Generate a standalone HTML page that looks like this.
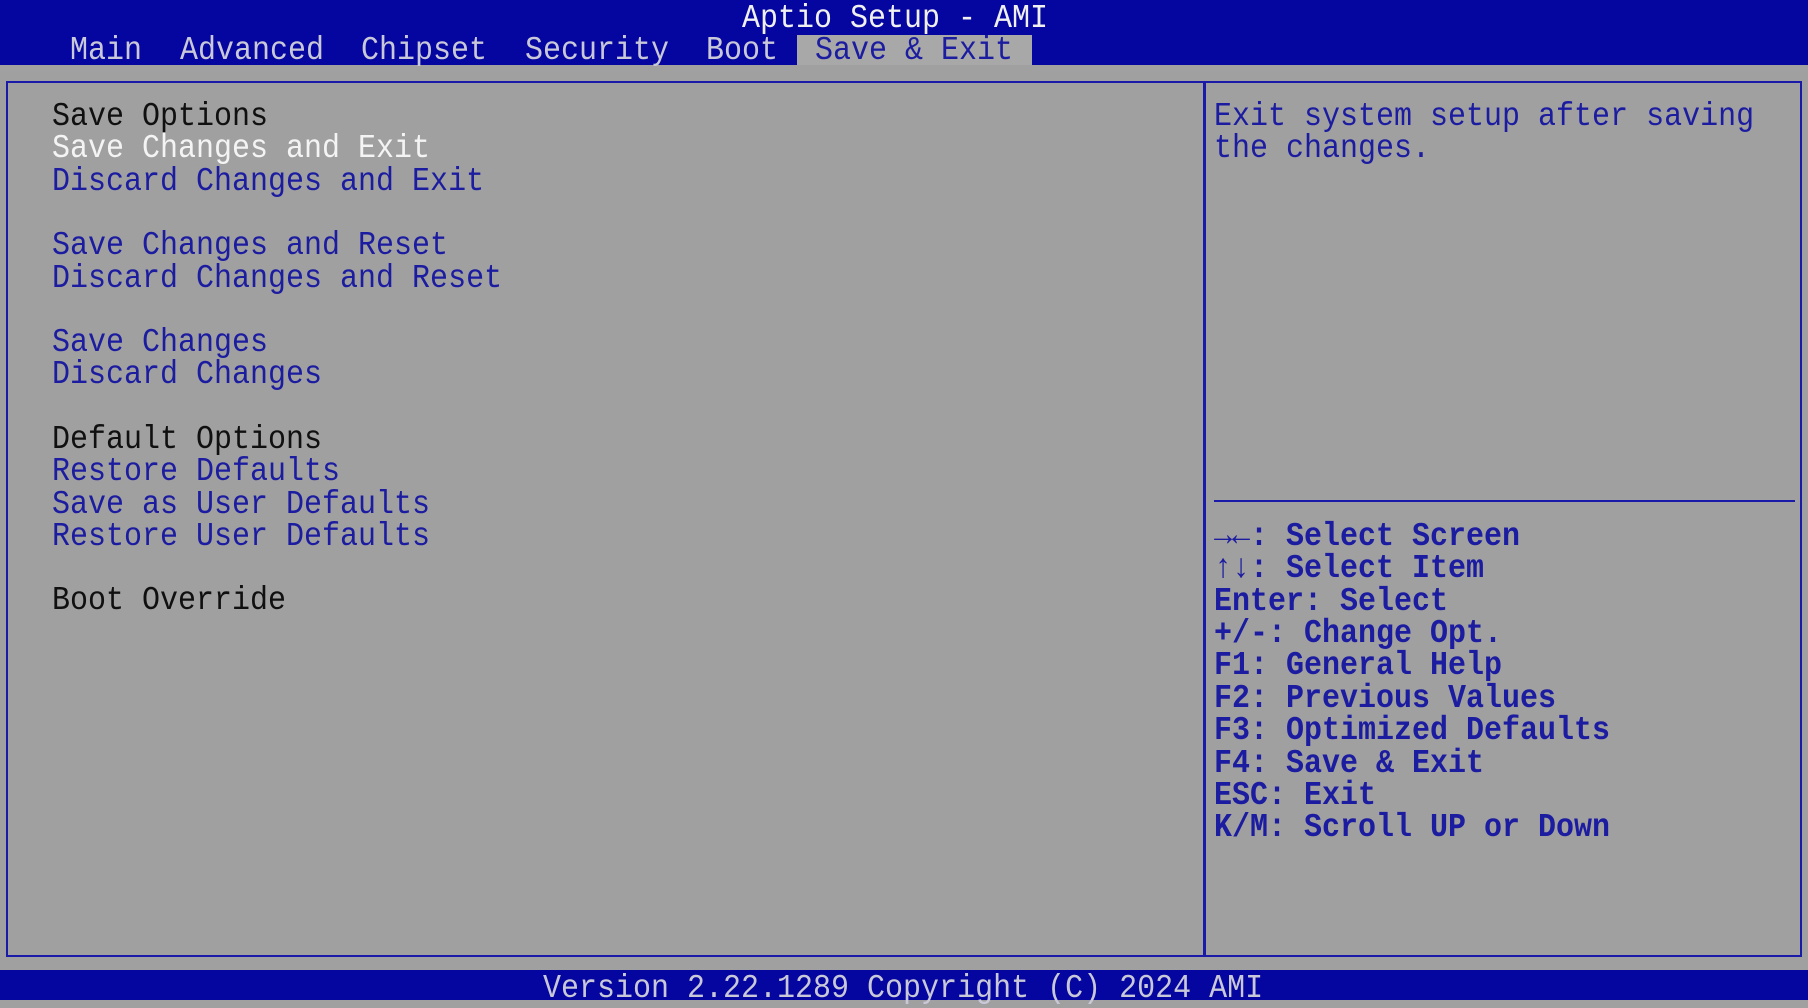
<!DOCTYPE html>
<html><head><meta charset="utf-8"><style>
html,body{margin:0;padding:0}
body{width:1808px;height:1000px;background:#a0a0a0;position:relative;overflow:hidden;font-family:"Liberation Mono","DejaVu Sans Mono",monospace;font-size:30px;}
.t{position:absolute;white-space:pre;line-height:32px;height:32px;transform:scaleY(1.12);transform-origin:left center}
#top{position:absolute;left:0;top:0;width:1808px;height:65px;background:#0505a0}
#foot{position:absolute;left:0;top:970px;width:1808px;height:30px;background:#0505a0}
.box{position:absolute;border:2px solid #1a1aa8}
.b{color:#1c1ca0}
.k{color:#1c1ca0;font-weight:bold}
.w{color:#f4f4f4}
.d{color:#101010}
.tab{color:#c8c8d8}
</style></head><body>
<div id="top"></div>
<div style="position:absolute;left:797px;top:35px;width:235px;height:30px;background:#a8a8a8"></div>
<div class="t" style="left:742px;top:3px;color:#f0f0f0">Aptio Setup - AMI</div>
<div class="t tab" style="left:70px;top:35px">Main</div>
<div class="t tab" style="left:180px;top:35px">Advanced</div>
<div class="t tab" style="left:361px;top:35px">Chipset</div>
<div class="t tab" style="left:525px;top:35px">Security</div>
<div class="t tab" style="left:706px;top:35px">Boot</div>
<div class="t" style="left:815px;top:35px;color:#1c1ca0">Save &amp; Exit</div>

<div class="box" style="left:6px;top:81px;width:1792px;height:872px"></div>
<div style="position:absolute;left:1203px;top:81px;width:3px;height:874px;background:#1a1aa8"></div>
<div style="position:absolute;left:1214px;top:500px;width:581px;height:2px;background:#1a1aa8"></div>

<div class="t d" style="left:52px;top:101px">Save Options</div>
<div class="t w" style="left:52px;top:133px">Save Changes and Exit</div>
<div class="t b" style="left:52px;top:166px">Discard Changes and Exit</div>
<div class="t b" style="left:52px;top:230px">Save Changes and Reset</div>
<div class="t b" style="left:52px;top:263px">Discard Changes and Reset</div>
<div class="t b" style="left:52px;top:327px">Save Changes</div>
<div class="t b" style="left:52px;top:359px">Discard Changes</div>
<div class="t d" style="left:52px;top:424px">Default Options</div>
<div class="t b" style="left:52px;top:456px">Restore Defaults</div>
<div class="t b" style="left:52px;top:489px">Save as User Defaults</div>
<div class="t b" style="left:52px;top:521px">Restore User Defaults</div>
<div class="t d" style="left:52px;top:585px">Boot Override</div>

<div class="t b" style="left:1214px;top:101px">Exit system setup after saving</div>
<div class="t b" style="left:1214px;top:133px">the changes.</div>

<div class="t k" style="left:1214px;top:521px">→←: Select Screen</div>
<div class="t k" style="left:1214px;top:553px">↑↓: Select Item</div>
<div class="t k" style="left:1214px;top:586px">Enter: Select</div>
<div class="t k" style="left:1214px;top:618px">+/-: Change Opt.</div>
<div class="t k" style="left:1214px;top:650px">F1: General Help</div>
<div class="t k" style="left:1214px;top:683px">F2: Previous Values</div>
<div class="t k" style="left:1214px;top:715px">F3: Optimized Defaults</div>
<div class="t k" style="left:1214px;top:748px">F4: Save &amp; Exit</div>
<div class="t k" style="left:1214px;top:780px">ESC: Exit</div>
<div class="t k" style="left:1214px;top:812px">K/M: Scroll UP or Down</div>

<div id="foot"></div>
<div class="t" style="left:543px;top:973px;color:#c8c8d8">Version 2.22.1289 Copyright (C) 2024 AMI</div>
</body></html>
